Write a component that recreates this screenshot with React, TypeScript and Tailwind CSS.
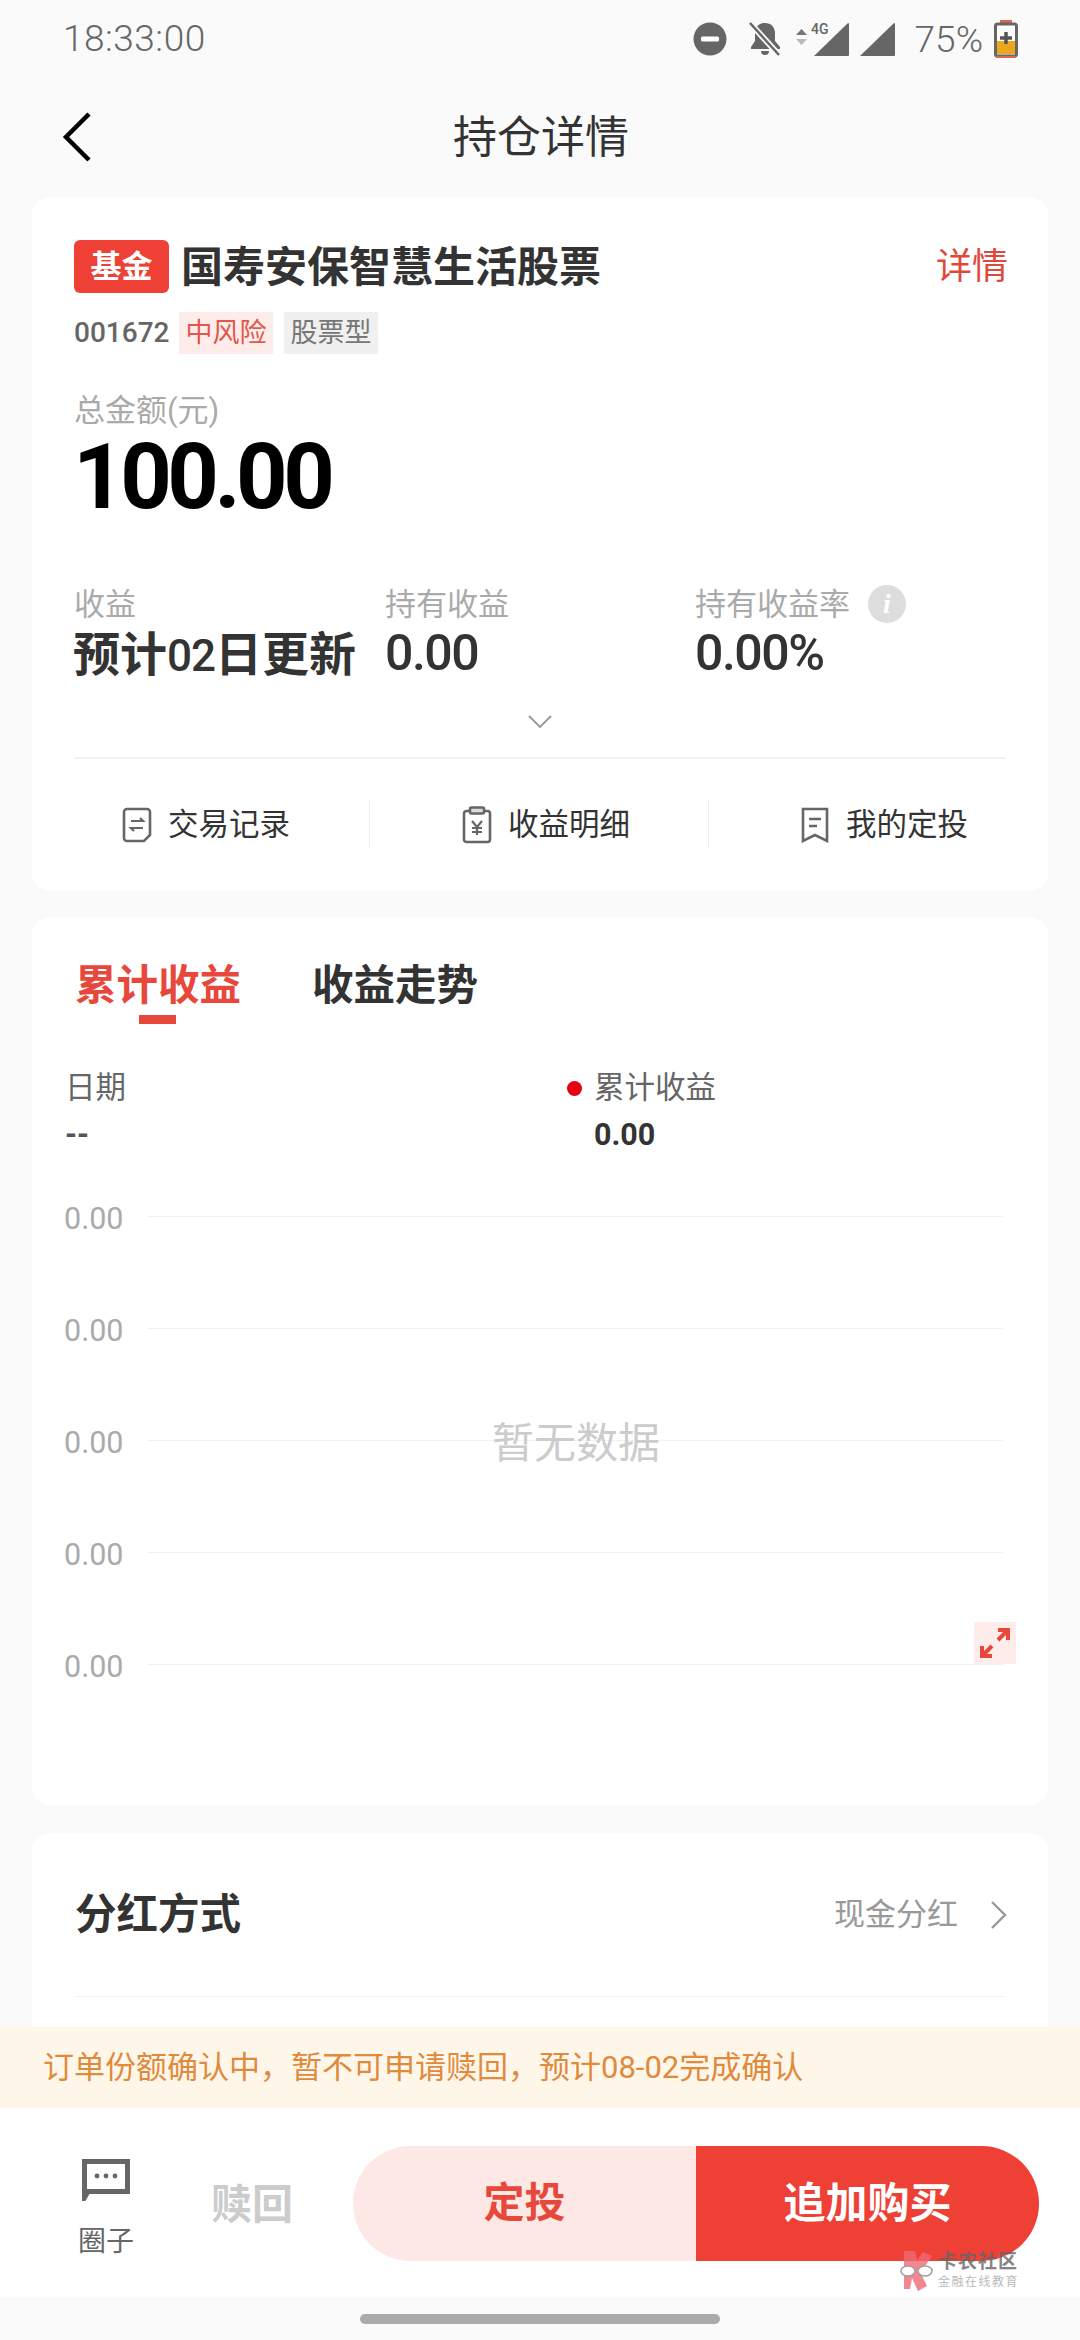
import React from "react";

const FONT = "font-['Roboto','Noto_Sans_CJK_SC',sans-serif]";

function StatusBar() {
  return (
    <div className="h-[78px] flex items-center pl-[63px] pr-[62px] text-[37px] text-[#666666] justify-between shrink-0">
      <span className="font-light tracking-[0.5px]">18:33:00</span>
      <div className="flex items-center">
        <svg width="34" height="34" viewBox="0 0 34 34" className="mr-[20px]">
          <circle cx="17" cy="17" r="16.5" fill="#666" />
          <rect x="8" y="14.5" width="18" height="5" rx="1.5" fill="#fff" />
        </svg>
        <svg width="36" height="36" viewBox="0 0 36 36" className="mr-[13px]">
          <path d="M18 2c6 0 10 4 10 10v8l5 6v2H4v-2l4-6v-8c0-6 4-10 10-10z" fill="#666" />
          <path d="M14 30h8a4 4 0 0 1-8 0z" fill="#666" />
          <path d="M3 2l29 32" stroke="#fafafa" strokeWidth="6" />
          <path d="M3 2l29 32" stroke="#666" strokeWidth="2.5" />
        </svg>
        <svg width="54" height="36" viewBox="0 0 54 36">
          <path d="M0 14l5.500-6 5.500 6z" fill="#777" />
          <path d="M0 18l5.500 6 5.500-6z" fill="#bbb" />
          <text x="15" y="13" fontSize="14" fontWeight="500" fill="#666" fontFamily="Roboto">4G</text>
          <path d="M18 35L52 2a1 1 0 0 1 1 1v31a1 1 0 0 1-1 1z" fill="#666" />
        </svg>
        <svg width="35" height="36" viewBox="0 0 35 36" className="ml-[10px] mr-[20px]">
          <path d="M0 35L34 2a1 1 0 0 1 1 1v31a1 1 0 0 1-1 1z" fill="#666" />
        </svg>
        <span className="font-light leading-none mr-[11px]">75%</span>
        <svg width="24" height="38" viewBox="0 0 24 38">
          <rect x="6" y="0" width="12" height="5" fill="#d9674f" />
          <rect x="1.500" y="4" width="21" height="32" rx="2" fill="#fff" stroke="#666" strokeWidth="3" />
          <rect x="3" y="21" width="18" height="13" fill="#e9a820" />
          <path d="M12 12v12M6 18h12" stroke="#555" strokeWidth="3.5" />
          <rect x="2" y="36" width="20" height="2" fill="#d9674f" />
        </svg>
      </div>
    </div>
  );
}

function NavBar() {
  return (
    <div className="relative h-[119px] flex items-center justify-center shrink-0">
      <svg width="30" height="50" viewBox="0 0 30 50" className="absolute left-[62px] top-[34px]">
        <path d="M27 2L4 25l23 23" fill="none" stroke="#000" strokeWidth="4.5" />
      </svg>
      <span className="ml-[2px] text-[44px] leading-none text-[#333333]">持仓详情</span>
    </div>
  );
}

function Stat({ label, children, w, info }: { label: string; children: React.ReactNode; w: string; info?: boolean }) {
  return (
    <div className={w}>
      <div className="flex items-center h-[36px] text-[31px] leading-none text-[#aaaaaa]">
        {label}
        {info && (
          <span className="ml-[18px] w-[38px] h-[38px] rounded-full bg-[#dddddd] flex items-center justify-center text-white text-[28px] font-bold italic font-['Liberation_Serif',serif]">
            i
          </span>
        )}
      </div>
      {children}
    </div>
  );
}

const Doc = () => (
  <svg width="30" height="36" viewBox="0 0 30 36" fill="none" stroke="#666" strokeWidth="2.6">
    <path d="M5 2h20a3 3 0 0 1 3 3v23l-6 6H5a3 3 0 0 1-3-3V5a3 3 0 0 1 3-3z" />
    <path d="M9 14h12l-3-3M21 21H9l3 3" strokeWidth="2.2" />
  </svg>
);
const Clip = () => (
  <svg width="30" height="38" viewBox="0 0 30 38" fill="none" stroke="#666" strokeWidth="2.6">
    <rect x="2" y="5" width="26" height="31" rx="2.5" />
    <rect x="8" y="1.500" width="14" height="6" rx="1.5" fill="#ddd" />
    <path d="M10 15l5 6 5-6M15 21v8M10 22h10M10 26h10" strokeWidth="2.2" />
  </svg>
);
const Mark = () => (
  <svg width="30" height="38" viewBox="0 0 30 38" fill="none" stroke="#666" strokeWidth="2.6">
    <path d="M3 3h24v32l-12-6-12 6z" />
    <path d="M9 13h12M9 20h8" strokeWidth="2.4" />
  </svg>
);

function Action({ icon, text, cls }: { icon: React.ReactNode; text: string; cls: string }) {
  return (
    <div className={`flex items-center gap-[16px] ${cls}`}>
      {icon}
      <span className="text-[30.5px] leading-none text-[#333333]">{text}</span>
    </div>
  );
}

function HoldingCard() {
  return (
    <section className="bg-white rounded-[18px] h-[694px] px-[42px] pt-[43px] flex flex-col">
      <div className="flex items-center h-[53px]">
        <span className="w-[95px] h-[53px] rounded-[6px] bg-[#ee4035] text-white font-bold text-[31px] leading-none flex items-center justify-center">基金</span>
        <span className="ml-[12px] mt-[3px] text-[42px] leading-none font-bold text-[#333333]">国寿安保智慧生活股票</span>
        <span className="ml-auto -mr-[2px] mt-[1px] text-[36px] leading-none text-[#e0483c]">详情</span>
      </div>
      <div className="flex items-center h-[42px] mt-[19px]">
        <span className="w-[105px] text-[28px] leading-none font-medium text-[#666666]">001672</span>
        <span className="w-[94px] h-[42px] bg-[#fdecea] text-[#e0584c] text-[27px] flex items-center justify-center leading-none">中风险</span>
        <span className="ml-[11px] w-[94px] h-[42px] bg-[#f0f0f0] text-[#777777] text-[27px] flex items-center justify-center leading-none">股票型</span>
      </div>
      <div className="mt-[41px] text-[31px] leading-none text-[#aaaaaa]">总金额(元)</div>
      <div className="-ml-[1px] mt-[10px] h-[84px] text-[90px] leading-[84px] font-bold text-black tracking-[-4.5px]">100.00</div>
      <div className="flex mt-[66px] h-[107px]">
        <Stat label="收益" w="w-[311px]">
          <div className="mt-[8px] -ml-[1px] text-[47px] leading-[50px] font-bold text-[#333333] whitespace-nowrap">预计<span className="text-[44px] font-medium tracking-[-1px]">02</span>日更新</div>
        </Stat>
        <Stat label="持有收益" w="w-[310px]">
          <div className="mt-[6px] text-[50px] leading-[50px] font-medium text-[#333333] tracking-[-1.5px]">0.00</div>
        </Stat>
        <Stat label="持有收益率" w="w-[300px]" info>
          <div className="mt-[6px] text-[50px] leading-[50px] font-medium text-[#333333] tracking-[-1.5px]">0.00%</div>
        </Stat>
      </div>
      <div className="flex justify-center mt-[22px] h-[14px]">
        <svg width="24" height="14" viewBox="0 0 24 14" fill="none" stroke="#999" strokeWidth="1.8">
          <path d="M1 1l11 11L23 1" />
        </svg>
      </div>
      <div className="mt-[28px] h-[2px] bg-[#f3f3f3]" />
      <div className="relative flex items-center h-[48px] mt-[42px]">
        <Action icon={<Doc />} text="交易记录" cls="ml-[48px] w-[247px]" />
        <div className="w-[1px] h-[48px] bg-[#eeeeee]" />
        <Action icon={<Clip />} text="收益明细" cls="ml-[92px] w-[246px]" />
        <div className="w-[1px] h-[48px] bg-[#eeeeee]" />
        <Action icon={<Mark />} text="我的定投" cls="ml-[91px]" />
      </div>
    </section>
  );
}

function ChartCard() {
  const rows = [0, 1, 2, 3, 4];
  return (
    <section className="bg-white rounded-[18px] h-[888px] mt-[26px] flex flex-col">
      <div className="flex h-[108px] pl-[43px] pt-[48px] relative">
        <span className="text-[41.5px] leading-none font-bold text-[#e8473b]">累计收益</span>
        <span className="ml-[71px] text-[41.5px] leading-none font-bold text-[#333333]">收益走势</span>
        <span className="absolute left-[107px] top-[98px] w-[37px] h-[9px] bg-[#e8473b]" />
      </div>
      <div className="flex pl-[33px] mt-[45px] h-[90px] text-[30.5px]">
        <div className="w-[502px]">
          <div className="leading-[36px] text-[#666666]">日期</div>
          <div className="mt-[11px] leading-[36px] font-bold text-[#555555]">--</div>
        </div>
        <div>
          <div className="flex items-center leading-[36px] text-[#666666]">
            <span className="w-[15px] h-[15px] rounded-full bg-[#e60012] mr-[12px]" />
            累计收益
          </div>
          <div className="pl-[27px] mt-[11px] leading-[36px] font-bold text-[#333333]">0.00</div>
        </div>
      </div>
      <div className="relative mt-[56px] pl-[32px] pr-[45px]">
        {rows.map((r) => (
          <div key={r} className="flex h-[112px] first:mt-0 items-start">
            <span className="w-[84px] text-[30.5px] leading-[36px] text-[#aaaaaa] -mt-[15px]">0.00</span>
            <div className="flex-1 h-[1px] bg-[#f2f2f2]" />
          </div>
        ))}
        <span className="absolute left-[460px] top-[203px] text-[42px] leading-[50px] text-[#cccccc]">暂无数据</span>
        <div className="absolute left-[942px] top-[406px] w-[42px] h-[42px] bg-[#fdecea] flex items-center justify-center">
          <svg width="32" height="32" viewBox="0 0 32 32" fill="none" stroke="#e8473b" strokeWidth="4">
            <path d="M19 13L29 3M19 3h10v10" />
            <path d="M13 19L3 29M3 19v10h10" />
          </svg>
        </div>
      </div>
    </section>
  );
}

function DividendCard() {
  return (
    <section className="bg-white rounded-t-[18px] mt-[28px] h-[220px] px-[43px]">
      <div className="flex items-center h-[163px]">
        <span className="text-[41.5px] leading-none font-bold text-[#333333]">分红方式</span>
        <span className="ml-auto text-[31px] leading-none text-[#999999]">现金分红</span>
        <svg width="18" height="30" viewBox="0 0 18 30" fill="none" stroke="#999" strokeWidth="2.4" className="ml-[32px] -mr-[3px]">
          <path d="M2 2l13 13L2 28" />
        </svg>
      </div>
      <div className="h-[1px] bg-[#eeeeee]" />
    </section>
  );
}

function Footer() {
  return (
    <div className="relative bg-white h-[189px] flex items-start shrink-0">
      <div className="ml-[74px] w-[64px] pt-[51px] flex flex-col items-center">
        <svg width="48" height="42" viewBox="0 0 48 42" fill="none">
          <path d="M2.500 2.500h43v30H6l-3.500 6z" stroke="#666" strokeWidth="5" />
          <circle cx="15" cy="17" r="2.4" fill="#666" />
          <circle cx="24" cy="17" r="2.4" fill="#666" />
          <circle cx="33" cy="17" r="2.4" fill="#666" />
        </svg>
        <span className="mt-[27px] text-[28px] leading-none text-[#666666] whitespace-nowrap">圈子</span>
      </div>
      <span className="ml-[73px] mt-[76px] text-[41px] leading-[42px] font-bold text-[#cccccc]">赎回</span>
      <div className="ml-[60px] mt-[38px] flex h-[115px]">
        <button className="w-[343px] h-[115px] rounded-l-full bg-[#fde8e6] text-[#e8473b] text-[41px] font-bold">定投</button>
        <button className="w-[343px] h-[115px] rounded-r-full bg-[#ee4035] text-white text-[42px] font-bold">追加购买</button>
      </div>
      <div className="absolute left-[900px] top-[142px] flex items-start opacity-80">
        <svg width="36" height="42" viewBox="0 0 36 42">
          <path d="M4 1h11l2 9 6-8 9 4-7 10 8 3-3 6-10-3 7 14-9 5-6-13-2 11H4z" fill="#ef6a76" />
          <ellipse cx="8" cy="21" rx="7" ry="5" fill="#fff" stroke="#888" strokeWidth="1.5" />
          <ellipse cx="25" cy="21" rx="7" ry="5" fill="#fff" stroke="#888" strokeWidth="1.5" />
        </svg>
        <div className="ml-[2px] flex flex-col">
          <span className="text-[19px] leading-[24px] font-bold text-[#666666] tracking-[1px] whitespace-nowrap">卡农社区</span>
          <span className="text-[12px] leading-[16px] text-[#aaaaaa] tracking-[1.5px] whitespace-nowrap">金融在线教育</span>
        </div>
      </div>
    </div>
  );
}

export default function App() {
  return (
    <div className={`${FONT} w-[1080px] h-[2340px] bg-[#fafafa] flex flex-col overflow-hidden`}>
      <StatusBar />
      <NavBar />
      <main className="flex-1 min-h-0 overflow-hidden px-[32px]">
        <HoldingCard />
        <ChartCard />
        <DividendCard />
      </main>
      <div className="h-[81px] bg-[#fff6ea] flex items-center pl-[43px] text-[31px] leading-none text-[#e08a3c] shrink-0">
        订单份额确认中，暂不可申请赎回，预计08-02完成确认
      </div>
      <Footer />
      <div className="h-[43px] flex justify-center pt-[17px] shrink-0">
        <div className="w-[360px] h-[10px] rounded-full bg-[#aaaaaa]" />
      </div>
    </div>
  );
}
